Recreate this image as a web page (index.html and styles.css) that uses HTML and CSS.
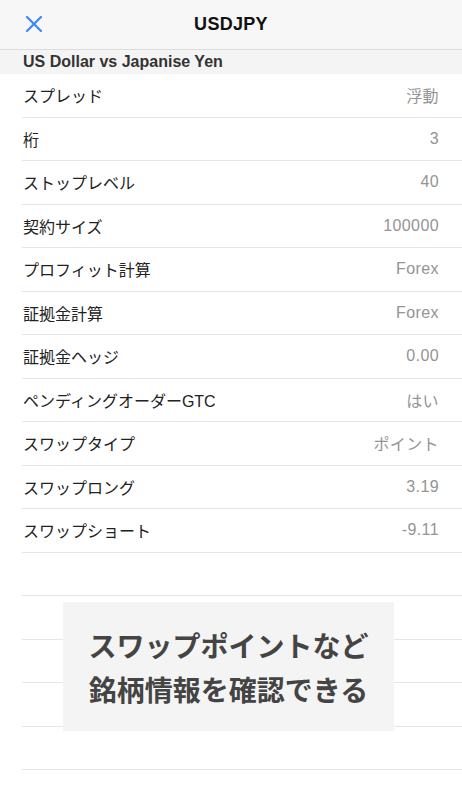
FILE: index.html
```html
<!DOCTYPE html>
<html lang="ja">
<head>
<meta charset="utf-8">
<link rel="stylesheet" href="styles.css">
</head>
<body>
<div class="page">
  <header class="navbar">
    <span class="close">
      <svg width="18" height="18" viewBox="0 0 18 18"><path d="M2 2 L16 16 M16 2 L2 16" stroke="#3d86f5" stroke-width="2.2" stroke-linecap="round"/></svg>
    </span>
    <h1 class="title">USDJPY</h1>
  </header>
  <div class="subhead">US Dollar vs Japanise Yen</div>
  <ul class="list">
    <li class="row"><span class="label">スプレッド</span><span class="value">浮動</span></li>
    <li class="row"><span class="label">桁</span><span class="value">3</span></li>
    <li class="row"><span class="label">ストップレベル</span><span class="value">40</span></li>
    <li class="row"><span class="label">契約サイズ</span><span class="value">100000</span></li>
    <li class="row"><span class="label">プロフィット計算</span><span class="value">Forex</span></li>
    <li class="row"><span class="label">証拠金計算</span><span class="value">Forex</span></li>
    <li class="row"><span class="label">証拠金ヘッジ</span><span class="value">0.00</span></li>
    <li class="row"><span class="label">ペンディングオーダーGTC</span><span class="value">はい</span></li>
    <li class="row"><span class="label">スワップタイプ</span><span class="value">ポイント</span></li>
    <li class="row"><span class="label">スワップロング</span><span class="value">3.19</span></li>
    <li class="row"><span class="label">スワップショート</span><span class="value">-9.11</span></li>
    <li class="row empty"></li>
    <li class="row empty"></li>
    <li class="row empty"></li>
    <li class="row empty"></li>
    <li class="row empty"></li>
    <li class="row empty"></li>
  </ul>
  <div class="caption">スワップポイントなど<br>銘柄情報を確認できる</div>
</div>
</body>
</html>
```
FILE: styles.css
```css
* { box-sizing: border-box; }
html, body { margin: 0; padding: 0; background: #fff; }
body {
  font-family: "Liberation Sans", "Noto Sans CJK JP", sans-serif;
  color: #222;
  width: 462px;
  height: 800px;
  overflow: hidden;
}
.page { position: relative; height: 800px; overflow: hidden; }
.navbar {
  height: 50px;
  background: #f7f7f7;
  border-bottom: 1px solid #dcdcdc;
  display: flex;
  align-items: center;
  justify-content: center;
  position: relative;
}
.close {
  position: absolute;
  left: 25px;
  top: 15px;
  width: 18px;
  height: 18px;
  display: flex;
}
.title {
  margin: 0;
  font-size: 18px;
  font-weight: bold;
  color: #111;
  letter-spacing: 0.3px;
}
.subhead {
  height: 24px;
  background: #f4f4f4;
  padding-left: 23px;
  font-size: 16px;
  font-weight: bold;
  color: #333;
  line-height: 24px;
}
.list { list-style: none; margin: 0; padding: 0 0 0 22px; }
.row {
  height: 43.5px;
  border-bottom: 1px solid #e6e6e6;
  display: flex;
  align-items: center;
  justify-content: space-between;
  padding: 0 23px 0 1px;
  font-size: 16px;
}
.label { color: #222; }
.value { color: #949494; letter-spacing: 0.4px; }
.caption {
  position: absolute;
  left: 63px;
  top: 602px;
  width: 331px;
  height: 129px;
  background: #f4f4f4;
  display: flex;
  align-items: center;
  justify-content: center;
  text-align: center;
  font-family: "Noto Sans CJK JP", sans-serif;
  font-weight: bold;
  font-size: 28px;
  line-height: 44px;
  color: #444;
}
```
